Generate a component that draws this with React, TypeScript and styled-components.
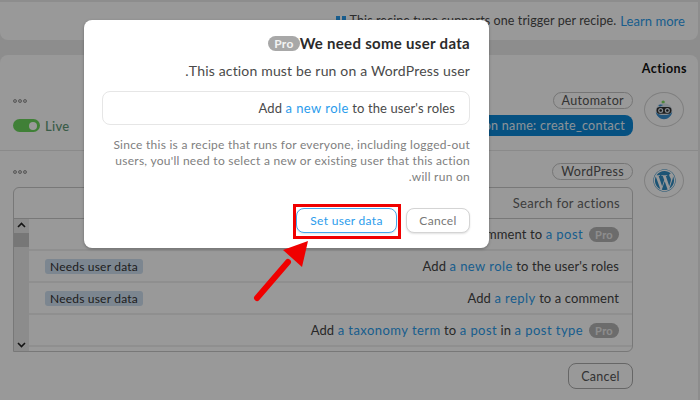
import React from 'react';
import styled, { createGlobalStyle } from 'styled-components';
import { FaWordpress } from 'react-icons/fa';

const GlobalStyle = createGlobalStyle`
  html, body {
    margin: 0;
    padding: 0;
    overflow: hidden;
  }
  * {
    box-sizing: border-box;
  }
  body {
    font-family: Lato, "Open Sans", sans-serif;
    color: #4a4a4a;
  }
`;

const Page = styled.div`
  position: relative;
  width: 700px;
  height: 400px;
  overflow: hidden;
  background: #ececec;
  padding: 2px 2px 0 0;
  display: flex;
  flex-direction: column;
  gap: 15px;
`;

const Notice = styled.div`
  height: 38px;
  background: #fff;
  border-radius: 0 0 8px 8px;
  display: flex;
  justify-content: flex-end;
  align-items: flex-start;
  gap: 4px;
  padding: 11px 13px 0 0;
  font-size: 12.5px;
  line-height: 16px;
  letter-spacing: 0.1px;
`;

const NoticeIcon = styled.svg`
  margin-top: 3px;
  flex: none;
`;

const Link = styled.span`
  color: #2b9cec;
  font-size: 13px;
  letter-spacing: 0.05px;
`;

const Card = styled.div`
  flex: 1;
  background: #fff;
  border-radius: 8px 8px 0 0;
  display: flex;
  flex-direction: column;
`;

const CardTitle = styled.div`
  text-align: right;
  font-size: 12.5px;
  font-weight: 700;
  line-height: 16px;
  letter-spacing: 0.45px;
  color: #111;
  padding: 6px 11px 0 0;
  height: 37px;
`;

const ActionRow = styled.div<{ $last?: boolean }>`
  display: flex;
  gap: 11px;
  padding: 0 14px 0 13px;
  height: ${({ $last }) => ($last ? 'auto' : '59px')};
  border-bottom: ${({ $last }) => ($last ? 'none' : '1px solid #e6e6e6')};
  margin-top: ${({ $last }) => ($last ? '12px' : '0')};
`;

const ActionBody = styled.div`
  flex: 1;
  display: flex;
  flex-direction: column;
`;

const ActionHead = styled.div`
  display: flex;
  justify-content: space-between;
  align-items: center;
  height: 17px;
`;

const Dots = styled.div`
  display: flex;
  gap: 1px;
`;

const Dot = styled.span`
  width: 4px;
  height: 4px;
  border-radius: 50%;
  background: #ddd;
  border: 1px solid #999;
`;

const Tag = styled.span`
  height: 17px;
  padding: 0 8px;
  border: 1px solid #c4c4c4;
  border-radius: 9px;
  font-size: 12.5px;
  line-height: 15px;
  letter-spacing: 0.35px;
  color: #555;
`;

const StatusLine = styled.div`
  display: flex;
  justify-content: space-between;
  align-items: center;
  margin-top: 6px;
`;

const Live = styled.div`
  display: flex;
  align-items: center;
  gap: 5px;
  font-size: 13px;
  font-weight: 500;
  color: #5f9a78;
  letter-spacing: 0.3px;
`;

const Toggle = styled.span`
  width: 27px;
  height: 13px;
  border-radius: 7px;
  background: #6cd65c;
  display: flex;
  justify-content: flex-end;
  align-items: center;
  padding-right: 3px;
`;

const Knob = styled.span`
  width: 8px;
  height: 8px;
  border-radius: 50%;
  background: #fff;
`;

const NamePill = styled.div`
  height: 21px;
  width: 300px;
  background: #0a87d8;
  border-radius: 0 8px 8px 0;
  color: #e8f4fc;
  font-size: 12.5px;
  line-height: 21px;
  letter-spacing: 0.3px;
  padding-right: 8px;
  text-align: right;
`;

const LogoCircle = styled.div`
  width: 40px;
  height: 35px;
  flex: none;
  border: 1px solid #d5d5d5;
  border-radius: 50%;
  display: flex;
  align-items: center;
  justify-content: center;
  color: #2f8cc4;
`;

const Picker = styled.div`
  margin-top: 7px;
  height: 165px;
  border: 1px solid #c8c8c8;
  border-radius: 6px 6px 6px 0;
  display: flex;
  flex-direction: column;
  overflow: hidden;
`;

const PickerSearch = styled.div`
  height: 31px;
  flex: none;
  border-bottom: 1px solid #c8c8c8;
  text-align: right;
  padding: 7px 12px 0 0;
  font-size: 13px;
  line-height: 16px;
  letter-spacing: 0.3px;
  color: #666;
`;

const PickerBody = styled.div`
  flex: 1;
  display: flex;
`;

const Scrollbar = styled.div`
  width: 15px;
  flex: none;
  background: #eaeaea;
  display: flex;
  flex-direction: column;
  justify-content: space-between;
  position: relative;
  font-size: 0;
`;

const ScrollThumb = styled.span`
  position: absolute;
  top: 14px;
  left: 0;
  width: 15px;
  height: 14px;
  background: #c6c6c6;
`;

const Options = styled.div`
  flex: 1;
  display: flex;
  flex-direction: column;
`;

const Option = styled.div`
  height: 32px;
  flex: none;
  border-bottom: 2px solid #efefef;
  display: flex;
  align-items: center;
  justify-content: space-between;
  padding: 0 13px 0 16px;
  font-size: 13px;
  letter-spacing: 0.1px;
  color: #444;
`;

const OptionText = styled.span`
  margin-left: auto;
`;

const NeedsData = styled.span`
  height: 15px;
  padding: 0 5px;
  background: #cfe0f1;
  border-radius: 3px;
  font-size: 12px;
  line-height: 15px;
  letter-spacing: 0.2px;
  color: #333;
`;

const ProBadge = styled.span`
  height: 15px;
  padding: 0 6px;
  margin-left: 6px;
  background: #b4b4b4;
  border-radius: 8px;
  font-size: 11px;
  font-weight: 700;
  line-height: 15px;
  letter-spacing: 0.3px;
  color: #ececec;
`;

const BlueText = styled.span`
  color: #2b9cec;
  letter-spacing: 0.45px;
`;

const Footer = styled.div`
  display: flex;
  justify-content: flex-end;
  margin-top: 11px;
`;

const FooterCancel = styled.button`
  width: 65px;
  height: 26px;
  background: #fff;
  border: 1px solid #aaa;
  border-radius: 8px;
  font-family: inherit;
  font-size: 12.5px;
  letter-spacing: 0.3px;
  color: #555;
  padding: 0;
`;

const Overlay = styled.div`
  position: absolute;
  inset: 0;
  background: rgba(0, 0, 0, 0.4);
  padding: 20px 0 0 84px;
`;

const Modal = styled.div`
  width: 405px;
  height: 228px;
  background: #fff;
  border-radius: 8px;
  box-shadow: 0 1px 3px rgba(0, 0, 0, 0.3);
  padding: 15px 19px 0 18px;
  direction: rtl;
  display: flex;
  flex-direction: column;
`;

const ModalTitle = styled.div`
  display: flex;
  align-items: center;
  height: 16px;
  font-size: 15px;
  font-weight: 700;
  letter-spacing: 0.3px;
  color: #2b2b2b;
`;

const TitlePro = styled.span`
  height: 15px;
  padding: 0 6px;
  background: #a8a8a8;
  border-radius: 8px;
  font-size: 12px;
  font-weight: 700;
  line-height: 15px;
  letter-spacing: 0.3px;
  color: #f3f3f3;
`;

const ModalLead = styled.div`
  margin-top: 11px;
  font-size: 14px;
  line-height: 18px;
  letter-spacing: 0.17px;
  color: #4a4a4a;
`;

const SelectedAction = styled.div`
  margin-top: 11px;
  height: 34px;
  border: 1px solid #e6e6e6;
  border-radius: 8px;
  padding: 0 14px;
  display: flex;
  align-items: center;
  font-size: 13px;
  letter-spacing: 0.1px;
  color: #4a4a4a;
`;

const ModalHelp = styled.div`
  margin-top: 12px;
  font-size: 12px;
  line-height: 16px;
  letter-spacing: 0.26px;
  color: #808080;
`;

const ModalActions = styled.div`
  margin-top: auto;
  margin-bottom: 15px;
  display: flex;
  gap: 9px;
`;

const ModalButton = styled.button<{ $primary?: boolean }>`
  height: 25px;
  width: ${({ $primary }) => ($primary ? '101px' : '64px')};
  background: #fff;
  border: 1px solid ${({ $primary }) => ($primary ? '#45a8ee' : '#d4d4d4')};
  border-radius: 8px;
  box-shadow: 0 1px 2px rgba(0, 0, 0, 0.12);
  font-family: inherit;
  font-size: 12px;
  letter-spacing: 0.3px;
  color: ${({ $primary }) => ($primary ? '#2b9cec' : '#777')};
  padding: 0;
`;

const Highlight = styled.div`
  position: absolute;
  left: 293px;
  top: 204px;
  width: 108px;
  height: 35px;
  border: 3px solid #f00000;
`;

const Arrow = styled.svg`
  position: absolute;
  left: 250px;
  top: 238px;
`;

const Chevron = styled.svg`
  display: block;
  margin: 3px auto;
`;

const RobotLogo = () => (
  <svg width="20" height="20" viewBox="0 0 22 24">
    <circle cx="10" cy="2.5" r="2" fill="#7fe060" />
    <ellipse cx="11" cy="13" rx="10" ry="9" fill="#dfe9f2" />
    <path d="M1 14c1 5 5 9 10 9s9-4 10-9c-2 3-5 4-10 4s-8-1-10-4z" fill="#3a8fd0" />
    <path d="M4 6c2-1 4-1 6 0l-4 2z" fill="#3a8fd0" />
    <rect x="2" y="8.5" width="18" height="8" rx="4" fill="#333" />
    <circle cx="7" cy="12.5" r="3" fill="#dfe9f2" />
    <circle cx="15" cy="12.5" r="3" fill="#dfe9f2" />
    <circle cx="7" cy="12.5" r="1.5" fill="#222" />
    <circle cx="15" cy="12.5" r="1.5" fill="#222" />
  </svg>
);

const MenuDots = () => (
  <Dots>
    <Dot />
    <Dot />
    <Dot />
  </Dots>
);

const ScrollArrow = ({ up }: { up?: boolean }) => (
  <Chevron width="9" height="6" viewBox="0 0 9 6">
    <path
      d={up ? 'M1 5l3.5-3.5L8 5' : 'M1 1l3.5 3.5L8 1'}
      fill="none"
      stroke="#222"
      strokeWidth="1.6"
    />
  </Chevron>
);

export default function App() {
  return (
    <>
      <GlobalStyle />
      <Page>
        <Notice>
          <NoticeIcon width="10" height="10" viewBox="0 0 10 10">
            <rect width="4" height="10" fill="#2b9cec" />
            <rect x="6" width="4" height="10" fill="#2b9cec" />
          </NoticeIcon>
          <span>This recipe type supports one trigger per recipe.</span>
          <Link>Learn more</Link>
        </Notice>
        <Card>
          <CardTitle>Actions</CardTitle>
          <ActionRow>
            <ActionBody>
              <ActionHead>
                <MenuDots />
                <Tag>Automator</Tag>
              </ActionHead>
              <StatusLine>
                <Live>
                  <Toggle>
                    <Knob />
                  </Toggle>
                  Live
                </Live>
                <NamePill>Action name: create_contact</NamePill>
              </StatusLine>
            </ActionBody>
            <LogoCircle>
              <RobotLogo />
            </LogoCircle>
          </ActionRow>
          <ActionRow $last>
            <ActionBody>
              <ActionHead>
                <MenuDots />
                <Tag>WordPress</Tag>
              </ActionHead>
              <Picker>
                <PickerSearch>Search for actions</PickerSearch>
                <PickerBody>
                  <Scrollbar>
                    <ScrollArrow up />
                    <ScrollThumb />
                    <ScrollArrow />
                  </Scrollbar>
                  <Options>
                    <Option>
                      <OptionText>
                        Add a comment to <BlueText>a post</BlueText>
                      </OptionText>
                      <ProBadge>Pro</ProBadge>
                    </Option>
                    <Option>
                      <NeedsData>Needs user data</NeedsData>
                      <OptionText>
                        Add <BlueText>a new role</BlueText> to the user's roles
                      </OptionText>
                    </Option>
                    <Option>
                      <NeedsData>Needs user data</NeedsData>
                      <OptionText>
                        Add <BlueText>a reply</BlueText> to a comment
                      </OptionText>
                    </Option>
                    <Option>
                      <OptionText>
                        Add <BlueText>a taxonomy term</BlueText> to <BlueText>a post</BlueText> in{' '}
                        <BlueText>a post type</BlueText>
                      </OptionText>
                      <ProBadge>Pro</ProBadge>
                    </Option>
                  </Options>
                </PickerBody>
              </Picker>
              <Footer>
                <FooterCancel>Cancel</FooterCancel>
              </Footer>
            </ActionBody>
            <LogoCircle>
              <FaWordpress size={23} />
            </LogoCircle>
          </ActionRow>
        </Card>
        <Overlay>
          <Modal>
            <ModalTitle>
              We need some user data
              <TitlePro>Pro</TitlePro>
            </ModalTitle>
            <ModalLead>This action must be run on a WordPress user.</ModalLead>
            <SelectedAction>
              <span>
                <bdi>
                  Add <BlueText>a new role</BlueText> to the user's roles
                </bdi>
              </span>
            </SelectedAction>
            <ModalHelp>
              Since this is a recipe that runs for everyone, including logged-out users, you'll need
              to select a new or existing user that this action will run on.
            </ModalHelp>
            <ModalActions>
              <ModalButton>Cancel</ModalButton>
              <ModalButton $primary>Set user data</ModalButton>
            </ModalActions>
          </Modal>
        </Overlay>
        <Highlight />
        <Arrow width="60" height="66" viewBox="0 0 60 66">
          <path d="M7 60L38 24" stroke="#f00000" strokeWidth="6" strokeLinecap="round" />
          <path d="M58 3L33 12L52 29Z" fill="#f00000" />
        </Arrow>
      </Page>
    </>
  );
}
